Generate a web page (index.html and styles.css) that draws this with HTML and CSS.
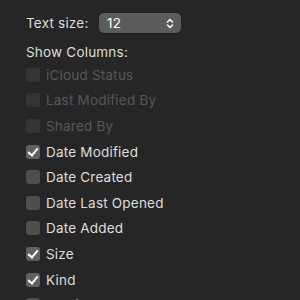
FILE: index.html
```html
<!DOCTYPE html>
<html lang="en">
	<head>
		<meta charset="UTF-8" />
		<title>View Options</title>
		<link rel="stylesheet" href="styles.css">
	</head>
	<body>
		<div class="panel">
			<div class="size-row">
				<span class="label">Text size:</span>
				<div class="popup">
					<span>12</span>
					<svg class="chevrons" width="8" height="11" viewBox="0 0 8 11">
						<path d="M1.5 4 L4 1.5 L6.5 4 M1.5 7 L4 9.5 L6.5 7" fill="none" stroke="#fff" stroke-width="1.5" stroke-linecap="round" stroke-linejoin="round" />
					</svg>
				</div>
			</div>
			<div class="heading">Show Columns:</div>
			<div class="item disabled"><span class="box"></span>iCloud Status</div>
			<div class="item disabled"><span class="box"></span>Last Modified By</div>
			<div class="item disabled"><span class="box"></span>Shared By</div>
			<div class="item checked"><span class="box"></span>Date Modified</div>
			<div class="item"><span class="box"></span>Date Created</div>
			<div class="item"><span class="box"></span>Date Last Opened</div>
			<div class="item"><span class="box"></span>Date Added</div>
			<div class="item checked"><span class="box"></span>Size</div>
			<div class="item checked"><span class="box"></span>Kind</div>
			<div class="item"><span class="box"></span>Version</div>
		</div>
	</body>
</html>
```

FILE: styles.css
```css
* {
	font-family: Inter, "Open Sans", sans-serif;
	box-sizing: border-box;
}
body {
	margin: unset;
	background-color: rgb(38, 38, 38);
	color: rgb(222, 222, 222);
	font-size: 13.5px;
	letter-spacing: 0.2px;
	height: 100vh;
	overflow: hidden;
}
.panel {
	padding: 13px 0 0 26px;
}
.size-row {
	display: flex;
	align-items: center;
	gap: 10px;
	height: 20px;
}
.label {
	width: 63px;
}
.popup {
	width: 82px;
	height: 20px;
	border-radius: 5px;
	background-color: rgb(92, 92, 92);
	display: flex;
	align-items: center;
	justify-content: space-between;
	padding: 0 7px 0 8px;
	color: #fff;
	box-shadow: 0 1px 1px rgba(0, 0, 0, 0.3);
}
.heading {
	margin-top: 9px;
	height: 20px;
	line-height: 20px;
}
.item {
	display: flex;
	align-items: center;
	gap: 6px;
	height: 25.6px;
}
.box {
	width: 14px;
	height: 14px;
	border-radius: 3px;
	background-color: rgb(78, 78, 78);
	position: relative;
}
.disabled {
	color: rgb(88, 88, 88);
}
.disabled .box {
	background-color: rgb(52, 52, 52);
}
.checked .box {
	background-color: rgb(96, 96, 96);
}
.checked .box::after {
	content: "";
	position: absolute;
	left: 4px;
	top: 1px;
	width: 4px;
	height: 8px;
	border-right: 2px solid #fff;
	border-bottom: 2px solid #fff;
	transform: rotate(40deg);
}
```
